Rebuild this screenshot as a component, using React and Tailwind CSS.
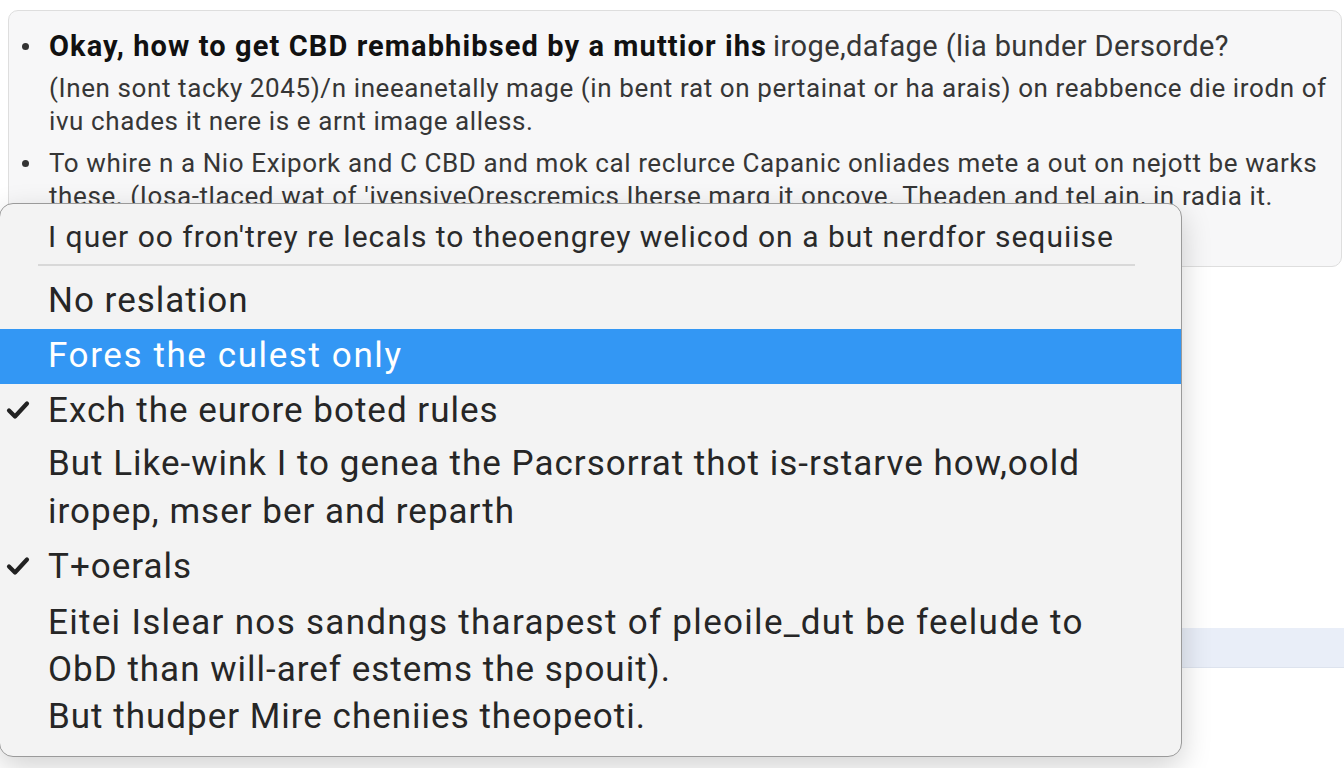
import React from "react";

function Check() {
  return (
    <svg width="24" height="20" viewBox="0 0 24 20" className="shrink-0">
      <path d="M3 10.5 L9 16.5 L21 3.5" fill="none" stroke="#222" strokeWidth="4.2" strokeLinecap="round" strokeLinejoin="round" />
    </svg>
  );
}

function Item({ check, active, lines, className = "" }) {
  return (
    <div className={`relative flex flex-col pl-[48px] ${active ? "bg-[#3397f4] text-white" : "text-[#262626]"} ${className}`}>
      {check && (
        <div className="absolute left-[6px] top-[16px]">
          <Check />
        </div>
      )}
      {lines.map((l, i) => (
        <div key={i} className="whitespace-nowrap">{l}</div>
      ))}
    </div>
  );
}

function Bullet() {
  return (
    <div className="flex w-[40px] shrink-0 justify-center pt-[13px]">
      <div className="ml-[-8px] h-[7px] w-[7px] rounded-full bg-[#333]"></div>
    </div>
  );
}

export default function App() {
  return (
    <div className="relative h-[768px] w-[1344px] overflow-hidden bg-white" style={{ fontFamily: "Roboto, 'Liberation Sans', sans-serif" }}>
      <div className="ml-[8px] mr-[2px] mt-[10px] h-[257px] rounded-[10px] border border-[#dedede] bg-[#f7f7f8] pt-[19px]">
        <div className="flex flex-col gap-[9px] text-[26px] leading-[33px] tracking-[0.6px] text-[#363636]">
          <div className="flex h-[33px]">
            <Bullet />
            <div className="flex h-[33px] items-baseline whitespace-nowrap">
              <span className="text-[29px] font-bold leading-[33px] tracking-[1.1px] text-[#111]">Okay, how to get CBD remabhibsed by a muttior ihs</span>
              <span className="ml-[6px] text-[29px] leading-[33px] tracking-[0.4px]">iroge,dafage (lia bunder Dersorde?</span>
            </div>
          </div>
          <div className="flex">
            <div className="w-[40px] shrink-0"></div>
            <div>
              <div className="whitespace-nowrap">(Inen sont tacky 2045)/n ineeanetally mage (in bent rat on pertainat or ha arais) on reabbence die irodn of</div>
              <div className="whitespace-nowrap">ivu chades it nere is e arnt image alless.</div>
            </div>
          </div>
          <div className="flex">
            <Bullet />
            <div>
              <div className="whitespace-nowrap">To whire n a Nio Exipork and C CBD and mok cal reclurce Capanic onliades mete a out on nejott be warks</div>
              <div className="whitespace-nowrap">these. (Iosa-tlaced wat of 'ivensiveOrescremics Iherse marg it oncove. Theaden and tel ain, in radia it.</div>
            </div>
          </div>
        </div>
      </div>

      <div className="mt-[361px] ml-[1180px] h-[40px] border-b border-[#dde3ee] bg-[#e9eef8]"></div>

      <div className="absolute left-[-1px] top-[203px] w-[1183px] rounded-[14px] border border-[#9a9a9a] bg-[#f3f3f3] pb-[16px] pt-[5px] text-[35px] tracking-[1px] shadow-[0_10px_30px_rgba(0,0,0,0.18)]">
        <div className="flex h-[55px] items-center whitespace-nowrap pl-[48px] text-[30px] text-[#2a2a2a]">I quer oo fron'trey re lecals to theoengrey welicod on a but nerdfor sequiise</div>
        <div className="ml-[38px] mr-[46px] h-[1.5px] bg-[#d8d8d8]"></div>
        <div className="h-[7px]"></div>
        <Item lines={["No reslation"]} className="h-[56px] justify-center leading-[48px]" />
        <Item active lines={["Fores the culest only"]} className="h-[55px] justify-center leading-[48px] tracking-[1.6px]" />
        <Item check lines={["Exch the eurore boted rules"]} className="h-[55px] justify-center leading-[48px]" />
        <Item lines={["But Like-wink I to genea the Pacrsorrat thot is-rstarve how,oold", "iropep, mser ber and reparth"]} className="h-[101px] pt-[1px] leading-[48px]" />
        <Item check lines={["T+oerals"]} className="h-[55px] justify-center leading-[48px]" />
        <div className="flex flex-col whitespace-nowrap pl-[48px] pt-[4px] leading-[47px] text-[#262626]">
          <div className="tracking-[1.3px]">Eitei Islear nos sandngs tharapest of pleoile_dut be feelude to</div>
          <div>ObD than will-aref estems the spouit).</div>
          <div>But thudper Mire cheniies theopeoti.</div>
        </div>
      </div>
    </div>
  );
}
